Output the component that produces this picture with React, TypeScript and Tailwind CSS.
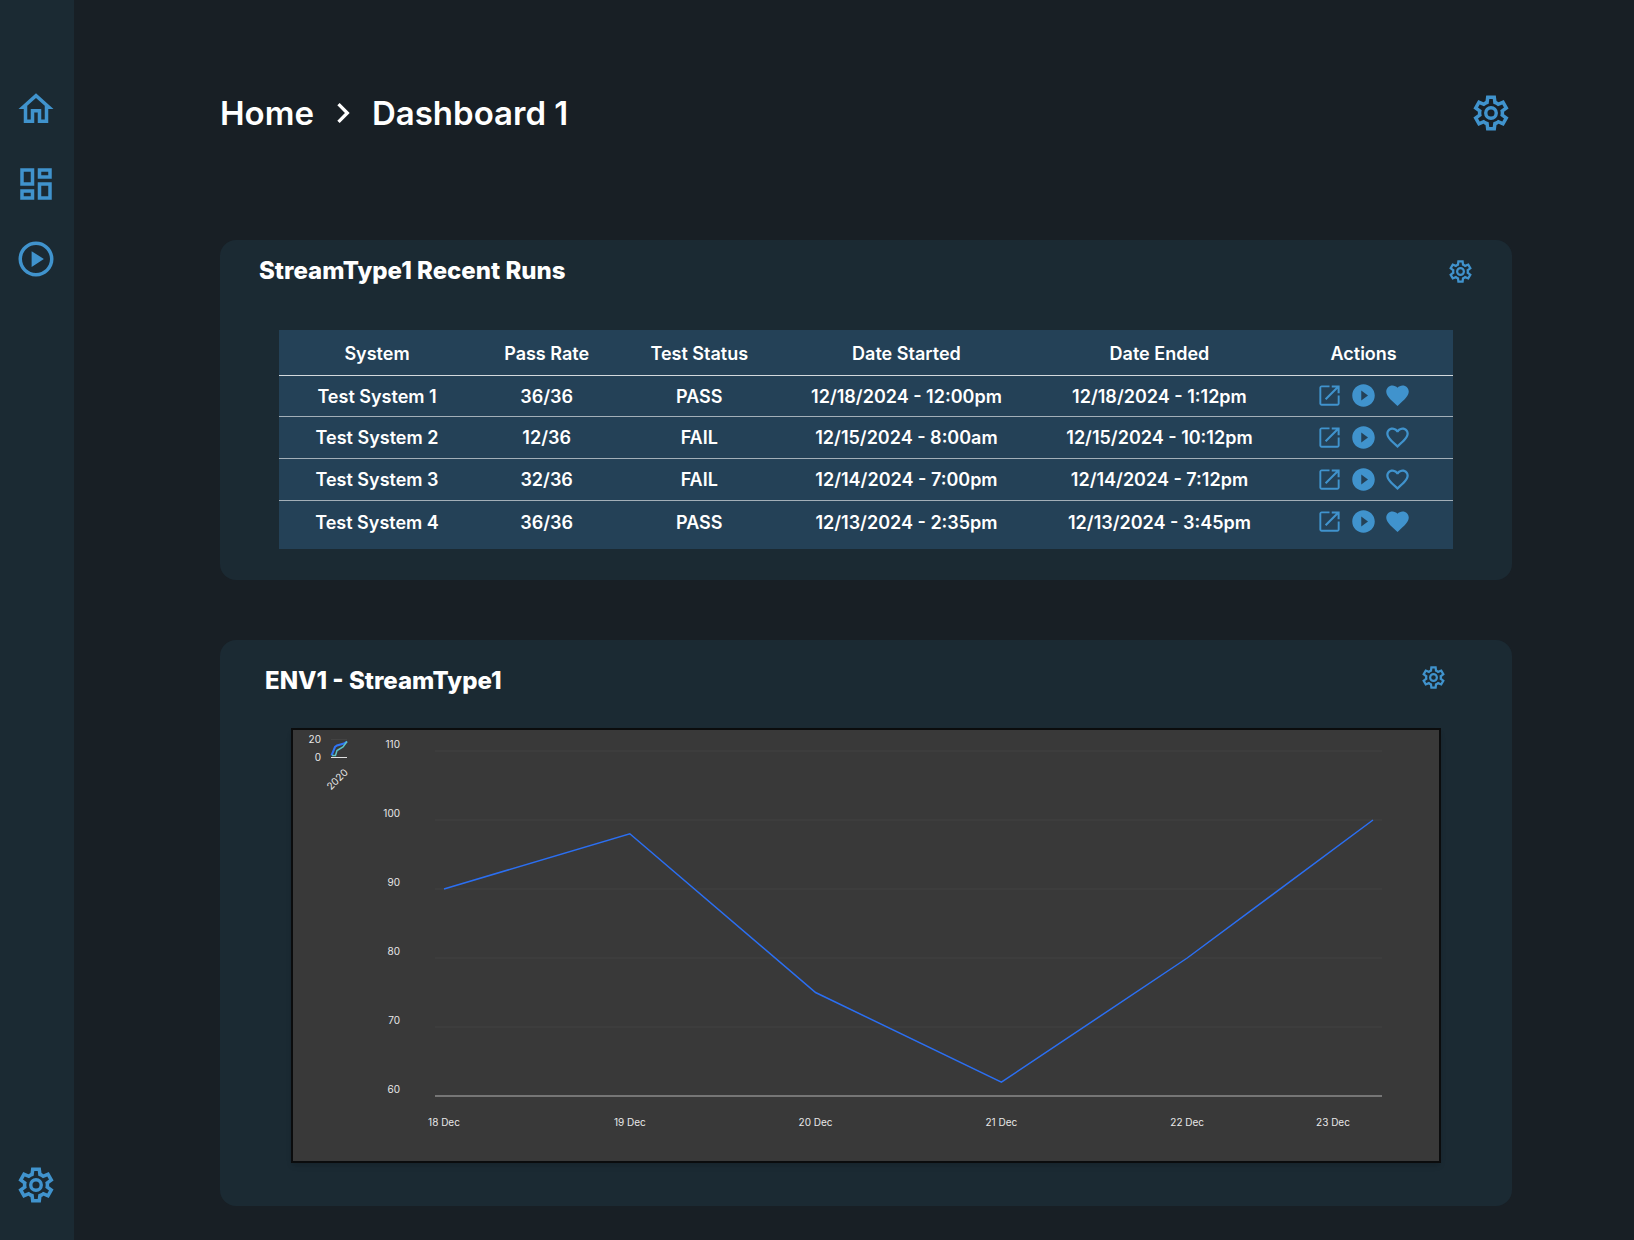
import React from "react";

type IconProps = { className?: string };

function Icon({ d, className = "size-[27px]" }: IconProps & { d: string }) {
  return (
    <svg viewBox="0 0 24 24" className={className} fill="currentColor" aria-hidden="true">
      <path d={d} />
    </svg>
  );
}

const HOME = "M12 5.69l5 4.5V18h-2v-6H9v6H7v-7.81l5-4.5M12 3L2 12h3v8h6v-6h2v6h6v-8h3L12 3z";
const DASHBOARD =
  "M19 5v2h-4V5h4M9 5v6H5V5h4m10 8v6h-4v-6h4M9 17v2H5v-2h4M21 3h-8v6h8V3zM11 3H3v10h8V3zm10 8h-8v10h8V11zm-10 4H3v6h8v-6z";
const PLAY_OUTLINE =
  "M12 2C6.48 2 2 6.48 2 12s4.48 10 10 10 10-4.48 10-10S17.52 2 12 2zm0 18c-4.41 0-8-3.59-8-8s3.59-8 8-8 8 3.59 8 8-3.59 8-8 8zm-2.5-3.5 7-4.5-7-4.5v9z";
const PLAY =
  "M12 2C6.48 2 2 6.48 2 12s4.48 10 10 10 10-4.48 10-10S17.52 2 12 2zm-2 14.5v-9l6 4.5-6 4.5z";
const OPEN =
  "M19.300 19.300H4.700V4.700H12V3H5c-1.110 0-2 .9-2 2v14c0 1.100.89 2 2 2h14c1.100 0 2-.9 2-2v-7h-1.700v7.300zM14 3v1.800h3.700l-9.800 9.800 1.300 1.300L19.200 6.100V10H21V3h-7z";
const HEART =
  "M12 21.35l-1.45-1.32C5.4 15.36 2 12.28 2 8.5 2 5.42 4.42 3 7.5 3c1.74 0 3.41.81 4.5 2.09C13.09 3.81 14.76 3 16.5 3 19.58 3 22 5.42 22 8.5c0 3.78-3.4 6.86-8.55 11.54L12 21.35z";
const HEART_OUTLINE =
  "M16.5 3c-1.74 0-3.41.81-4.5 2.09C10.91 3.81 9.24 3 7.5 3 4.42 3 2 5.42 2 8.5c0 3.78 3.4 6.86 8.55 11.54L12 21.35l1.45-1.32C18.6 15.36 22 12.28 22 8.5 22 5.42 19.58 3 16.5 3zm-4.4 15.55l-.1.1-.1-.1C7.14 14.24 4 11.39 4 8.5 4 6.5 5.5 5 7.5 5c1.54 0 3.04.99 3.57 2.36h1.87C13.46 5.99 14.96 5 16.5 5c2 0 3.5 1.5 3.5 3.5 0 2.89-3.14 5.74-7.9 10.05z";
const CHEVRON = "M10 6 8.59 7.41 13.17 12l-4.58 4.59L10 18l6-6-6-6z";

function Gear({ className = "size-[27px]" }: IconProps) {
  return (
    <svg viewBox="0 -960 960 960" className={className} fill="currentColor" aria-hidden="true">
      <path d="m370-80-16-128q-13-5-24.5-12T307-235l-119 50L78-375l103-78q-1-7-1-13.5v-27q0-6.5 1-13.5L78-585l110-190 119 50q11-8 23-15t24-12l16-128h220l16 128q13 5 24.5 12t22.5 15l119-50 110 190-103 78q1 7 1 13.5v27q0 6.5-2 13.5l103 78-110 190-118-50q-11 8-23 15t-24 12L590-80H370Zm70-80h79l14-106q31-8 57.5-23.5T639-327l99 41 39-68-86-65q5-14 7-29.5t2-31.5q0-16-2-31.5t-7-29.5l86-65-39-68-99 42q-22-23-48.5-38.5T533-694l-13-106h-79l-14 106q-31 8-57.5 23.5T321-633l-99-41-39 68 86 64q-5 15-7 30t-2 32q0 16 2 31t7 30l-86 65 39 68 99-42q22 23 48.5 38.5T427-266l13 106Z" />
      <circle cx="480" cy="-480" r="120" fill="none" stroke="currentColor" strokeWidth="78" />
    </svg>
  );
}

const COLUMNS = [
  { label: "System", width: "w-[16.7%]" },
  { label: "Pass Rate", width: "w-[12.2%]" },
  { label: "Test Status", width: "w-[13.8%]" },
  { label: "Date Started", width: "w-[21.5%]" },
  { label: "Date Ended", width: "w-[21.6%]" },
];

const RUNS = [
  { system: "Test System 1", rate: "36/36", status: "PASS", start: "12/18/2024 - 12:00pm", end: "12/18/2024 - 1:12pm", liked: true },
  { system: "Test System 2", rate: "12/36", status: "FAIL", start: "12/15/2024 - 8:00am", end: "12/15/2024 - 10:12pm", liked: false },
  { system: "Test System 3", rate: "32/36", status: "FAIL", start: "12/14/2024 - 7:00pm", end: "12/14/2024 - 7:12pm", liked: false },
  { system: "Test System 4", rate: "36/36", status: "PASS", start: "12/13/2024 - 2:35pm", end: "12/13/2024 - 3:45pm", liked: true },
];

function RunsTable() {
  return (
    <table className="w-full table-fixed border-collapse bg-[#244157] text-center text-lg leading-6 font-semibold">
      <thead>
        <tr className="h-[45px] border-b border-[#d3d9dd]">
          {COLUMNS.map((c) => (
            <th key={c.label} scope="col" className={`pt-1 font-semibold ${c.width}`}>
              {c.label}
            </th>
          ))}
          <th scope="col" className="pt-1 pr-3 font-semibold">
            Actions
          </th>
        </tr>
      </thead>
      <tbody>
        {RUNS.map((r) => (
          <tr
            key={r.system}
            className="h-[42px] border-b border-[#a3afb8] first:h-[41px] last:h-[49px] last:border-b-0 last:[&>td]:pb-1.5"
          >
            <td className="pt-0.5">{r.system}</td>
            <td className="pt-0.5">{r.rate}</td>
            <td className="pt-0.5">{r.status}</td>
            <td className="pt-0.5">{r.start}</td>
            <td className="pt-0.5">{r.end}</td>
            <td className="pr-3">
              <div className="flex justify-center gap-[7px] text-[#4093cd]">
                <button type="button" aria-label={`Open ${r.system}`}>
                  <Icon d={OPEN} />
                </button>
                <button type="button" aria-label={`Run ${r.system}`}>
                  <Icon d={PLAY} />
                </button>
                <button type="button" aria-label={`Favorite ${r.system}`} aria-pressed={r.liked}>
                  <Icon d={r.liked ? HEART : HEART_OUTLINE} />
                </button>
              </div>
            </td>
          </tr>
        ))}
      </tbody>
    </table>
  );
}

const POINTS = [
  { label: "18 Dec", value: 90 },
  { label: "19 Dec", value: 98 },
  { label: "20 Dec", value: 75 },
  { label: "21 Dec", value: 62 },
  { label: "22 Dec", value: 80 },
  { label: "23 Dec", value: 100 },
];
const TICKS = [110, 100, 90, 80, 70, 60];
const yOf = (v: number) => 366 - (v - 60) * 6.9;
const xOf = (i: number) => 151 + i * 185.8;

function RunsChart() {
  return (
    <svg
      viewBox="0 0 1146 431"
      role="img"
      aria-label="Results from 18 Dec to 23 Dec"
      className="block h-auto w-full border-2 border-[#0b0c0d] bg-[#393939] text-[10px] shadow-md"
      fill="#e8e8e8"
    >
      <line x1="38" x2="54" y1="9.5" y2="9.5" stroke="#434343" />
      <line x1="38" x2="54" y1="27.5" y2="27.5" stroke="#e0e0e0" />
      <path d="M38.500 25.500 L42 17 L44 15.500 L51 13.500 L54 11.500" fill="none" stroke="#2f74f5" strokeWidth="2" />
      <path d="M39 25.500 H42.500 L44 20.500 L50 17 L54 11.500" fill="none" stroke="#5cc3c5" strokeWidth="1.500" />
      <text x="28" y="13" textAnchor="end">20</text>
      <text x="28" y="31" textAnchor="end">0</text>
      <text x="44" y="53" textAnchor="middle" transform="rotate(-45 44 49)">2020</text>
      {TICKS.map((t) => (
        <g key={t}>
          <line x1="142" x2="1089" y1={yOf(t)} y2={yOf(t)} stroke={t === 60 ? "#b4b4b4" : "#424242"} />
          <text x="107" y={yOf(t) - 3} textAnchor="end">{t}</text>
        </g>
      ))}
      {POINTS.map((p, i) => (
        <text key={p.label} x={i === 5 ? 1040 : xOf(i)} y="396" textAnchor="middle">
          {p.label}
        </text>
      ))}
      <polyline
        points={POINTS.map((p, i) => `${xOf(i)},${yOf(p.value)}`).join(" ")}
        fill="none"
        stroke="#2b6ff2"
        strokeWidth="1.500"
      />
    </svg>
  );
}

export default function App() {
  return (
    <div className="flex min-h-screen bg-[#181f25] font-[Inter,sans-serif] text-white">
      <nav className="flex w-[74px] shrink-0 flex-col items-center bg-[#1b2a33] pt-[88px] pr-0.5 pb-[34px] text-[#4093cd]">
        <div className="flex flex-col gap-[33px]">
          <a href="#home" aria-label="Home">
            <Icon d={HOME} className="size-[42px]" />
          </a>
          <a href="#dashboards" aria-label="Dashboards">
            <Icon d={DASHBOARD} className="size-[42px]" />
          </a>
          <a href="#runs" aria-label="Runs">
            <Icon d={PLAY_OUTLINE} className="size-[42px]" />
          </a>
        </div>
        <a href="#settings" aria-label="Settings" className="mt-auto">
          <Gear className="size-[42px]" />
        </a>
      </nav>

      <main className="min-w-0 flex-1 pt-[92px] pr-[122px] pb-[34px] pl-[146px]">
        <header className="flex items-center justify-between">
          <h1 className="flex items-center text-[33px] leading-[42px] font-semibold">
            <a href="#home">Home</a>
            <Icon d={CHEVRON} className="mx-[9px] size-10" />
            <span>Dashboard 1</span>
          </h1>
          <button type="button" aria-label="Dashboard settings" className="text-[#4093cd]">
            <Gear className="size-[42px]" />
          </button>
        </header>

        <section className="mt-[106px] rounded-2xl bg-[#1b2a33] pt-[17px] pb-[31px]">
          <div className="flex items-end justify-between pr-[38px] pl-[39px]">
            <h2 className="text-2xl leading-7 font-extrabold">StreamType1 Recent Runs</h2>
            <button type="button" aria-label="Recent runs settings" className="text-[#4093cd]">
              <Gear />
            </button>
          </div>
          <div className="mt-[45px] px-[59px]">
            <RunsTable />
          </div>
        </section>

        <section className="mt-[60px] rounded-2xl bg-[#1b2a33] pt-6 pb-[43px]">
          <div className="flex items-start justify-between pr-[65px] pl-[45px]">
            <h2 className="pt-[3px] text-2xl leading-7 font-extrabold">ENV1 - StreamType1</h2>
            <button type="button" aria-label="Chart settings" className="text-[#4093cd]">
              <Gear />
            </button>
          </div>
          <div className="mt-[33px] px-[71px]">
            <RunsChart />
          </div>
        </section>
      </main>
    </div>
  );
}
